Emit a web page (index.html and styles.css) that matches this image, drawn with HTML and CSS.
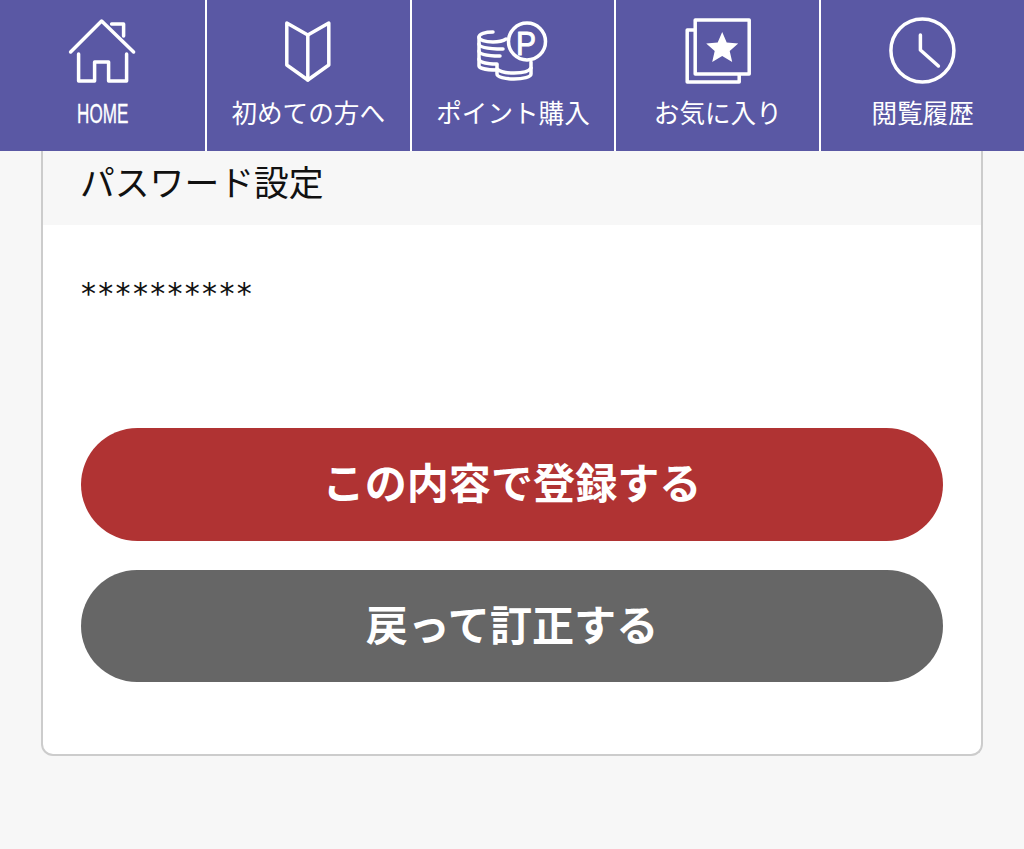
FILE: index.html
```html
<!DOCTYPE html>
<html lang="ja">
<head>
    <meta charset="UTF-8">
    <meta name="viewport" content="width=device-width, initial-scale=1.0">
    <title>パスワード設定</title>
    <link rel="stylesheet" href="styles.css">
</head>
<body>

    <nav class="global-nav">
        <a href="#" class="nav-item">
            <svg class="nav-icon" viewBox="62.4 12 80 80">
                <path d="M71 52 L102 21 L134 52"/>
                <path d="M112 24 H124 V36"/>
                <path d="M79 54 V81 H95 V62 H109 V81 H127 V54"/>
            </svg>
            <span class="nav-label nav-label-latin">HOME</span>
        </a>
        <a href="#" class="nav-item">
            <svg class="nav-icon" viewBox="268.2 12 80 80">
                <path d="M287 23 L308 35 L329 23 V65 L308 80 L287 65 Z"/>
                <path d="M308 35 V80"/>
            </svg>
            <span class="nav-label">初めての方へ</span>
        </a>
        <a href="#" class="nav-item">
            <svg class="nav-icon" viewBox="473 12 80 80">
                <path d="M493 32 C485 32 479 34 479 37 C479 40 485 42 493 42 C497 42 503 41 506 39"/>
                <path d="M479 37 V66 C479 68 486 70 497 70"/>
                <path d="M479 44 C479 47 486 49 503 49"/>
                <path d="M479 51 C479 54 486 56 500 56"/>
                <path d="M479 59 C479 62 486 64 497 64"/>
                <path d="M497 65 V74 C497 77 505 79 514 79 C523 79 531 77 531 74 V62"/>
                <path d="M497 69 C500 72 507 73 514 73 C522 73 529 72 531 68"/>
                <circle class="coin-face" cx="527" cy="41.5" r="18.5"/>
                <text class="coin-letter" x="516" y="54.5" textLength="20" lengthAdjust="spacingAndGlyphs">P</text>
            </svg>
            <span class="nav-label">ポイント購入</span>
        </a>
        <a href="#" class="nav-item">
            <svg class="nav-icon" viewBox="677.8 12 80 80">
                <path d="M694 30 H687 V82 H739 V75"/>
                <rect x="695" y="20" width="54" height="54"/>
                <path class="star" d="M722 32 L726.5 42.5 L738 43.5 L729.5 51 L732 62 L722 56 L712 62 L714.5 51 L706 43.5 L717.5 42.5 Z"/>
            </svg>
            <span class="nav-label">お気に入り</span>
        </a>
        <a href="#" class="nav-item">
            <svg class="nav-icon" viewBox="882.6 12 80 80">
                <circle cx="922" cy="50.5" r="31.5"/>
                <path d="M920 35 V50 L938 66"/>
            </svg>
            <span class="nav-label">閲覧履歴</span>
        </a>
    </nav>

    <div class="form-card">
        <h3 class="form-heading">パスワード設定</h3>
        <div class="form-body">
            <p class="form-value">**********</p>
            <button type="button" class="btn btn-submit">この内容で登録する</button>
            <button type="button" class="btn btn-back">戻って訂正する</button>
        </div>
    </div>

</body>
</html>
```

FILE: styles.css
```css
/* General Styles */
body {
    font-family: "Noto Sans CJK JP", "Liberation Sans", sans-serif;
    background: #f7f7f7;
    color: #111;
    margin: 0;
    padding: 0;
}

/* Global Nav */
.global-nav {
    display: grid;
    grid-template-columns: repeat(5, 1fr);
    height: 151px;
    background: #5a58a4;
}

.nav-item {
    display: flex;
    flex-direction: column;
    align-items: center;
    padding-top: 12px;
    border-left: 2px solid white;
    color: white;
    text-decoration: none;
}

.nav-item:first-child {
    border-left: none;
}

.nav-icon {
    width: 80px;
    height: 80px;
    fill: none;
    stroke: white;
    stroke-width: 3.5;
    stroke-linecap: round;
    stroke-linejoin: round;
}

.nav-icon .star {
    fill: white;
    stroke: none;
}

.nav-icon .coin-face {
    fill: #5a58a4;
}

.coin-letter {
    font-family: "Liberation Sans", sans-serif;
    font-size: 34px;
    fill: white;
    stroke: white;
    stroke-width: 1;
}

.nav-label {
    font-size: 25.6px;
    line-height: 40px;
    white-space: nowrap;
}

.nav-label-latin {
    font-family: "Liberation Sans", sans-serif;
    font-size: 28.5px;
    line-height: 43px;
    -webkit-text-stroke: 0.4px white;
    transform: scaleX(0.6);
}

/* Card */
.form-card {
    margin: 0 41px;
    background: white;
    border: 2px solid #ccc;
    border-top: none;
    border-radius: 0 0 12px 12px;
    overflow: hidden;
}

.form-heading {
    margin: 0;
    height: 74px;
    padding-left: 37px;
    background: #f7f7f7;
    font-size: 34.8px;
    font-weight: normal;
    line-height: 60px;
}

.form-body {
    display: flex;
    flex-direction: column;
    padding: 47px 38px 72px;
}

.form-value {
    margin: 0 0 112px;
    font-family: "DejaVu Sans", sans-serif;
    font-size: 30px;
    letter-spacing: 2.3px;
    line-height: 44px;
}

/* Buttons */
.btn {
    height: 112px;
    padding: 0 0 8px;
    border: none;
    border-radius: 56px;
    color: white;
    font-family: inherit;
    font-size: 42.1px;
    font-weight: bold;
    cursor: pointer;
}

.btn-submit {
    height: 113px;
    border-radius: 57px;
    background: #b03333;
    margin-bottom: 29px;
}

.btn-back {
    background: #666;
}
```
